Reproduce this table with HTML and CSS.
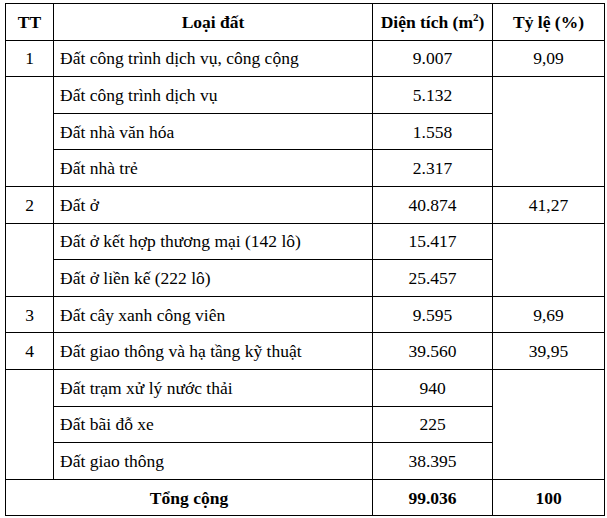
FILE: index.html
```html
<!DOCTYPE html>
<html lang="vi">
<head>
<meta charset="utf-8">
<title>Bảng cơ cấu sử dụng đất</title>
<link rel="stylesheet" href="styles.css">
</head>
<body>
<div class="wrap">
<table class="land">
  <colgroup>
    <col class="c-tt">
    <col class="c-name">
    <col class="c-area">
    <col class="c-pct">
  </colgroup>
  <thead>
    <tr>
      <th>TT</th>
      <th>Loại đất</th>
      <th>Diện tích (m<sup>2</sup>)</th>
      <th>Tỷ lệ (%)</th>
    </tr>
  </thead>
  <tbody>
    <tr>
      <td class="ctr">1</td>
      <td class="name">Đất công trình dịch vụ, công cộng</td>
      <td class="ctr">9.007</td>
      <td class="ctr">9,09</td>
    </tr>
    <tr>
      <td rowspan="3"></td>
      <td class="name">Đất công trình dịch vụ</td>
      <td class="ctr">5.132</td>
      <td rowspan="3"></td>
    </tr>
    <tr>
      <td class="name">Đất nhà văn hóa</td>
      <td class="ctr">1.558</td>
    </tr>
    <tr>
      <td class="name">Đất nhà trẻ</td>
      <td class="ctr">2.317</td>
    </tr>
    <tr>
      <td class="ctr">2</td>
      <td class="name">Đất ở</td>
      <td class="ctr">40.874</td>
      <td class="ctr">41,27</td>
    </tr>
    <tr>
      <td rowspan="2"></td>
      <td class="name">Đất ở kết hợp thương mại (142 lô)</td>
      <td class="ctr">15.417</td>
      <td rowspan="2"></td>
    </tr>
    <tr>
      <td class="name">Đất ở liền kế (222 lô)</td>
      <td class="ctr">25.457</td>
    </tr>
    <tr>
      <td class="ctr">3</td>
      <td class="name">Đất cây xanh công viên</td>
      <td class="ctr">9.595</td>
      <td class="ctr">9,69</td>
    </tr>
    <tr>
      <td class="ctr">4</td>
      <td class="name">Đất giao thông và hạ tầng kỹ thuật</td>
      <td class="ctr">39.560</td>
      <td class="ctr">39,95</td>
    </tr>
    <tr>
      <td rowspan="3"></td>
      <td class="name">Đất trạm xử lý nước thải</td>
      <td class="ctr">940</td>
      <td rowspan="3"></td>
    </tr>
    <tr>
      <td class="name">Đất bãi đỗ xe</td>
      <td class="ctr">225</td>
    </tr>
    <tr>
      <td class="name">Đất giao thông</td>
      <td class="ctr">38.395</td>
    </tr>
    <tr class="total">
      <td colspan="2" class="ctr">Tổng cộng</td>
      <td class="ctr">99.036</td>
      <td class="ctr">100</td>
    </tr>
  </tbody>
</table>
</div>
</body>
</html>
```
FILE: styles.css
```css
html, body {
  margin: 0;
  padding: 0;
  background: #ffffff;
}
.wrap {
  padding: 3px 0 0 5px;
}
.land {
  border-collapse: collapse;
  table-layout: fixed;
  width: 599px;
  font-family: "Liberation Serif", "Times New Roman", serif;
  font-size: 17.5px;
  color: #000;
}
.c-tt { width: 48px; }
.c-name { width: 319px; }
.c-area { width: 120px; }
.c-pct { width: 112px; }
.land tr {
  height: 36.6px;
}
.land th,
.land td {
  border: 1px solid #000;
  padding: 0;
  vertical-align: middle;
  line-height: 20px;
}
.land th {
  font-weight: bold;
  text-align: center;
}
.land sup {
  font-size: 11px;
  line-height: 0;
  vertical-align: 7px;
}
.ctr {
  text-align: center;
}
.name {
  text-align: left;
  padding-left: 6px !important;
}
.total td {
  font-weight: bold;
}
```
